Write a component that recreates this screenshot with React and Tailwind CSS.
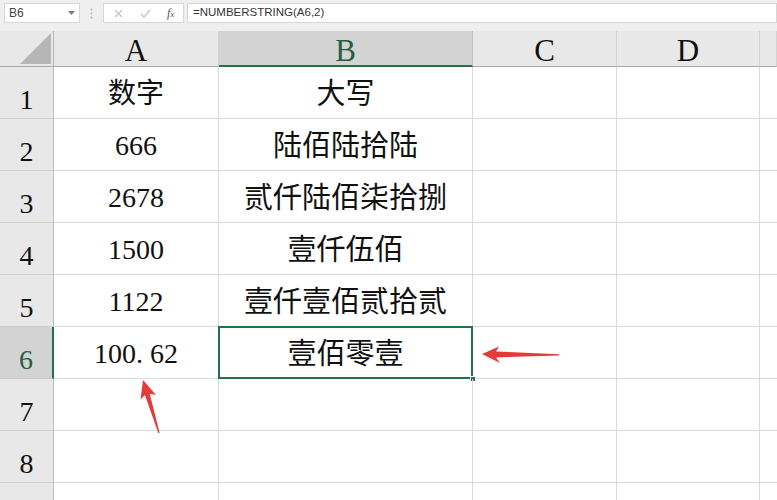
import React from "react";

const cols = ["A", "B", "C", "D", ""];
const data = [
  ["数字", "大写"],
  ["666", "陆佰陆拾陆"],
  ["2678", "贰仟陆佰柒拾捌"],
  ["1500", "壹仟伍佰"],
  ["1122", "壹仟壹佰贰拾贰"],
  [null, "壹佰零壹"],
  ["", ""],
  ["", ""],
  ["", ""],
];

function HeaderCell({ label, selected }) {
  if (selected) {
    return (
      <div className="bg-[#d3d3d3] border-r border-r-[#c4c4c4] border-b-2 border-b-[#217346] flex items-center justify-center text-[31px] leading-none text-[#2a5e41] pt-[5px]">
        {label}
      </div>
    );
  }
  return (
    <div className="bg-[#e8e8e8] border-r border-r-[#d3d3d3] border-b border-b-[#a9a9a9] flex items-center justify-center text-[31px] leading-none text-[#111] pt-[4px]">
      {label}
    </div>
  );
}

export default function App() {
  return (
    <div className="relative w-[777px] h-[500px] overflow-hidden bg-white font-['Liberation_Serif','Noto_Sans_CJK_SC',serif]">
      {/* formula bar */}
      <div className="h-[31px] bg-[#efefef] flex items-start pt-[3px] pl-[4px] font-['Liberation_Sans',sans-serif]">
        <div className="w-[76px] h-[20px] bg-white border border-[#d6d6d6] flex items-center justify-between pl-[4px] pr-[4px] text-[12px] text-[#444]">
          <span>B6</span>
          <svg width="7" height="4" viewBox="0 0 7 4">
            <path d="M0 0 L7 0 L3.5 4 Z" fill="#7a7a7a" />
          </svg>
        </div>
        <div className="w-[23px] h-[20px] flex items-center justify-center">
          <svg width="3" height="11" viewBox="0 0 3 11">
            <circle cx="1.5" cy="1.5" r="1" fill="#b8b8b8" />
            <circle cx="1.5" cy="5.5" r="1" fill="#b8b8b8" />
            <circle cx="1.5" cy="9.5" r="1" fill="#b8b8b8" />
          </svg>
        </div>
        <div className="w-[81px] h-[20px] bg-white border border-[#d6d6d6] flex items-center text-[#bcbcbc]">
          <svg className="ml-[10px]" width="9" height="9" viewBox="0 0 9 9">
            <path d="M1 1 L8 8 M8 1 L1 8" stroke="#c4c4c4" strokeWidth="1.2" />
          </svg>
          <svg className="ml-[17px]" width="11" height="9" viewBox="0 0 11 9">
            <path d="M1 5 L4 8 L10 1" stroke="#c4c4c4" strokeWidth="1.3" fill="none" />
          </svg>
          <span className="ml-[16px] text-[12px] italic text-[#555] font-['Liberation_Serif',serif]">
            f<span className="text-[9px]">x</span>
          </span>
        </div>
        <div className="flex-1 ml-[3px] h-[20px] bg-white border border-[#d6d6d6] flex items-center pl-[5px] text-[11.5px] text-[#333]">
          =NUMBERSTRING(A6,2)
        </div>
      </div>

      {/* sheet grid */}
      <div className="grid grid-cols-[54px_165px_254px_144px_143px_1fr] grid-rows-[36px_repeat(9,52px)]">
        {/* corner */}
        <div className="bg-[#e8e8e8] border-r border-r-[#b5b5b5] border-b border-b-[#a9a9a9] flex items-end justify-end pr-[2px] pb-[2px]">
          <svg width="31" height="31" viewBox="0 0 31 31">
            <path d="M0 31 L31 31 L31 0 Z" fill="#b6b6b6" />
          </svg>
        </div>
        {cols.map((c, i) => (
          <HeaderCell key={i} label={c} selected={c === "B"} />
        ))}

        {data.map((row, r) => {
          const rowNum = r + 1;
          const sel = rowNum === 6;
          return (
            <React.Fragment key={r}>
              <div
                className={
                  sel
                    ? "bg-[#d3d3d3] border-r-2 border-r-[#217346] border-b border-b-[#c8c8c8] flex items-end justify-center pb-[1px] text-[28px] leading-[34px] text-[#2a5e41]"
                    : "bg-[#e8e8e8] border-r border-r-[#bdbdbd] border-b border-b-[#cfcfcf] flex items-end justify-center pb-[1px] text-[28px] leading-[34px] text-[#111]"
                }
              >
                {rowNum < 9 ? rowNum : ""}
              </div>
              <div className="border-r border-b border-[#dadada] flex items-center justify-center text-[28px] leading-none text-[#111] pt-[3px]">
                {row[0] === null ? (
                  <span>
                    100<span className="inline-block w-[14px]">.</span>62
                  </span>
                ) : (
                  row[0]
                )}
              </div>
              <div className="relative border-r border-b border-[#dadada] flex items-center justify-center text-[29px] leading-none text-[#111] pt-[4px]">
                {row[1]}
                {sel && (
                  <>
                    <div className="absolute left-[-1px] top-[-1px] right-[-1px] bottom-[-1px] border-2 border-[#217346]" />
                    <div className="absolute right-[-4px] bottom-[-4px] w-[6px] h-[6px] bg-[#217346] border border-white" />
                  </>
                )}
              </div>
              <div className="border-r border-b border-[#dadada]" />
              <div className="border-r border-b border-[#dadada]" />
              <div className="border-b border-[#dadada]" />
            </React.Fragment>
          );
        })}
      </div>

      {/* annotation arrows */}
      <svg className="absolute left-0 top-0 pointer-events-none" width="777" height="500" viewBox="0 0 777 500">
        <polygon
          points="143,380 156,394.9 149.7,393.7 159.6,432.8 158.4,433.2 144.9,395.1 140.5,399.5"
          fill="#e5393a"
        />
        <polygon
          points="482,354 499,346.5 496,351.5 559,354.3 559,355.5 496,357.5 500,363"
          fill="#e5393a"
        />
      </svg>
    </div>
  );
}
